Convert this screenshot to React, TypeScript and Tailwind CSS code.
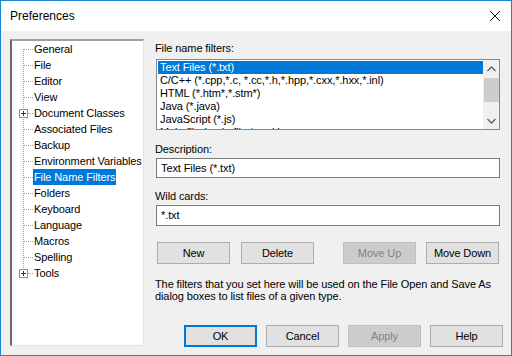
import React from "react";

const treeItems: { label: string; plus?: boolean; selected?: boolean }[] = [
  { label: "General" },
  { label: "File" },
  { label: "Editor" },
  { label: "View" },
  { label: "Document Classes", plus: true },
  { label: "Associated Files" },
  { label: "Backup" },
  { label: "Environment Variables" },
  { label: "File Name Filters", selected: true },
  { label: "Folders" },
  { label: "Keyboard" },
  { label: "Language" },
  { label: "Macros" },
  { label: "Spelling" },
  { label: "Tools", plus: true },
];

const filters = [
  "Text Files (*.txt)",
  "C/C++ (*.cpp,*.c, *.cc,*.h,*.hpp,*.cxx,*.hxx,*.inl)",
  "HTML (*.htm*,*.stm*)",
  "Java (*.java)",
  "JavaScript (*.js)",
  "Makefile (makefile;*.mak)",
];

function TreeLines({ first, last, plus }: { first: boolean; last: boolean; plus?: boolean }) {
  return (
    <svg width="21" height="16" className="shrink-0">
      <line x1="11.5" y1={first ? 8 : 0} x2="11.5" y2={last ? 8 : 16} stroke="#a0a0a0" strokeDasharray="1 1" />
      <line x1="12" y1="8.5" x2="21" y2="8.5" stroke="#a0a0a0" strokeDasharray="1 1" />
      {plus && (
        <g>
          <rect x="7.5" y="4.5" width="8" height="8" fill="#fff" stroke="#919191" />
          <line x1="9" y1="8.5" x2="14" y2="8.5" stroke="#333" />
          <line x1="11.5" y1="6" x2="11.5" y2="11" stroke="#333" />
        </g>
      )}
    </svg>
  );
}

function Btn({ children, disabled, primary }: { children: React.ReactNode; disabled?: boolean; primary?: boolean }) {
  const look = disabled
    ? "bg-[#cccccc] border-[#bfbfbf] text-[#838383]"
    : primary
    ? "bg-[#e1e1e1] border-2 border-[#0078d7] text-black"
    : "bg-[#e1e1e1] border-[#adadad] text-black";
  return (
    <div className={`w-[73px] h-[22px] border flex items-center justify-center ${look}`}>{children}</div>
  );
}

export default function App() {
  return (
    <div
      className="w-[512px] h-[356px] border border-[#1a83d4] flex flex-col bg-[#f0f0f0] text-[11px] tracking-[-0.1px] text-black overflow-hidden"
      style={{ fontFamily: '"Liberation Sans", Arial, sans-serif' }}
    >
      {/* title bar */}
      <div className="h-[30px] bg-white flex items-center justify-between pl-[9px] pr-[9px] shrink-0">
        <span className="text-[12px] tracking-normal">Preferences</span>
        <svg width="12" height="12" viewBox="0 0 12 12" className="mr-[1px]">
          <path d="M1 1 L11 11 M11 1 L1 11" stroke="#111" strokeWidth="1" />
        </svg>
      </div>

      <div className="flex flex-1 pl-[9px] pt-[8px]">
        {/* tree */}
        <div className="w-[134px] h-[307px] bg-white border-t-2 border-l-2 border-t-[#a0a0a0] border-l-[#696969] border-r border-b border-r-[#e3e3e3] border-b-[#e3e3e3]">
          {treeItems.map((it, i) => (
            <div key={it.label} className="flex items-center h-[16px]">
              <TreeLines first={i === 0} last={i === treeItems.length - 1} plus={it.plus} />
              <span
                className={`px-[1px] h-[16px] leading-[16px] whitespace-nowrap ${it.selected ? "bg-[#0078d7] text-white" : ""}`}
              >
                {it.label}
              </span>
            </div>
          ))}
        </div>

        {/* right side */}
        <div className="ml-[11px] w-[346px] flex flex-col">
          <div className="h-[16px] leading-[16px] mt-[1px]">File name filters:</div>
          <div className="mt-[3px] ml-[1px] w-[344px] h-[71px] bg-white border border-[#828790] flex">
            <div className="flex-1 pt-[1px] pl-[1px] overflow-hidden">
              {filters.map((f, i) => (
                <div
                  key={f}
                  className={`h-[13px] leading-[13px] pl-[2px] whitespace-nowrap ${i === 0 ? "bg-[#0078d7] text-white" : ""}`}
                >
                  {f}
                </div>
              ))}
            </div>
            <div className="w-[16px] bg-[#f0f0f0] flex flex-col items-center">
              <div className="h-[17px] flex items-center justify-center">
                <svg width="9" height="6" viewBox="0 0 9 6">
                  <path d="M0.5 5 L4.5 1 L8.5 5" fill="none" stroke="#606060" strokeWidth="1.3" />
                </svg>
              </div>
              <div className="w-[15px] h-[24px] bg-[#cdcdcd] mt-[1px]" />
              <div className="flex-1" />
              <div className="h-[17px] flex items-center justify-center">
                <svg width="9" height="6" viewBox="0 0 9 6">
                  <path d="M0.5 1 L4.5 5 L8.5 1" fill="none" stroke="#606060" strokeWidth="1.3" />
                </svg>
              </div>
            </div>
          </div>

          <div className="h-[16px] leading-[16px] mt-[11px]">Description:</div>
          <div className="mt-[1px] ml-[1px] w-[344px] h-[20px] bg-white border border-[#7a7a7a] flex items-center pl-[4px]">
            Text Files (*.txt)
          </div>

          <div className="h-[16px] leading-[16px] mt-[10px]">Wild cards:</div>
          <div className="mt-[1px] ml-[1px] w-[344px] h-[21px] bg-white border border-[#7a7a7a] flex items-center pl-[4px]">
            *.txt
          </div>

          <div className="mt-[16px] ml-[2px] flex">
            <Btn>New</Btn>
            <div className="ml-[11px]">
              <Btn>Delete</Btn>
            </div>
            <div className="ml-[29px]">
              <Btn disabled>Move Up</Btn>
            </div>
            <div className="ml-[10px]">
              <Btn>Move Down</Btn>
            </div>
          </div>

          <p className="mt-[14px] leading-[12px] w-[345px]">
            The filters that you set here will be used on the File Open and Save As dialog boxes to list files of a given type.
          </p>

          <div className="mt-[23px] flex justify-end gap-[9px] mr-[-2px]">
            <Btn primary>OK</Btn>
            <Btn>Cancel</Btn>
            <Btn disabled>Apply</Btn>
            <Btn>Help</Btn>
          </div>
        </div>
      </div>
    </div>
  );
}
